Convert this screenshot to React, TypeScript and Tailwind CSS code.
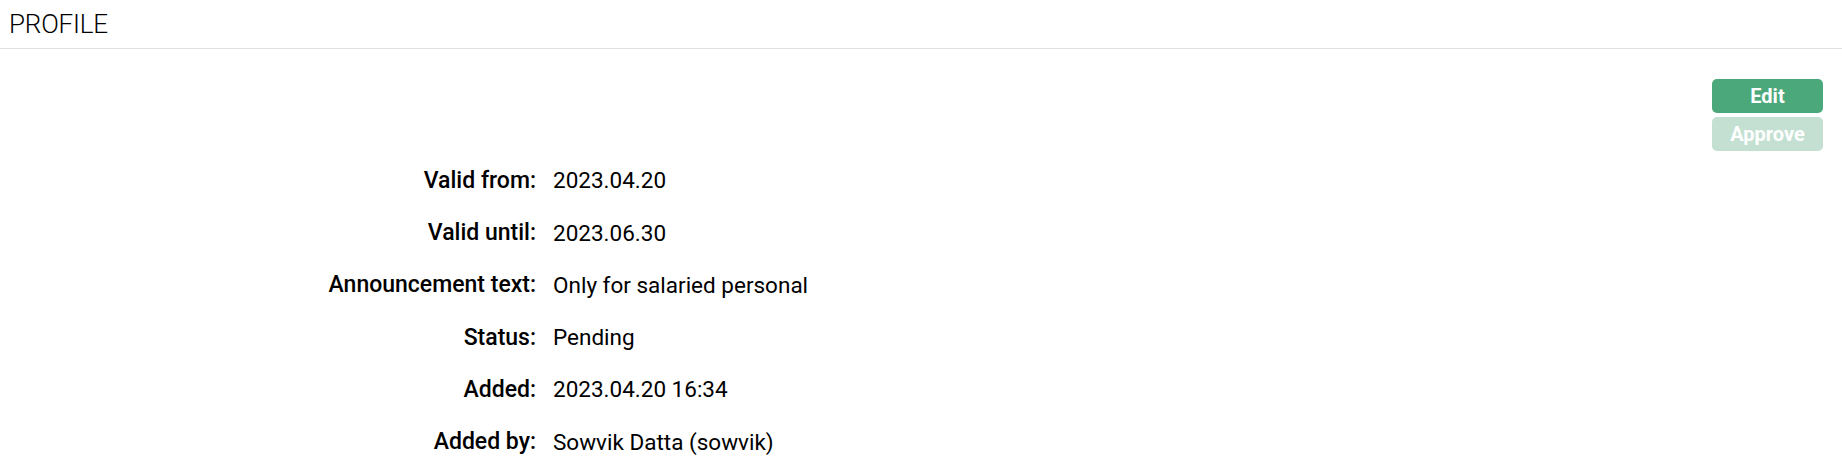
const rows: [string, string][] = [
  ["Valid from:", "2023.04.20"],
  ["Valid until:", "2023.06.30"],
  ["Announcement text:", "Only for salaried personal"],
  ["Status:", "Pending"],
  ["Added:", "2023.04.20 16:34"],
  ["Added by:", "Sowvik Datta (sowvik)"],
];

export default function App() {
  return (
    <div className="min-h-[467px] bg-white text-black" style={{ fontFamily: "Roboto, sans-serif" }}>
      {/* title bar */}
      <div className="flex h-[49px] items-center border-b border-[#e0e0e0] pl-[9px]">
        <h1 className="text-[26px] font-light leading-none tracking-[-0.2px]">PROFILE</h1>
      </div>

      {/* actions */}
      <div className="flex flex-col items-end gap-[4px] pr-[19px] pt-[30px]">
        <button className="h-[34px] w-[111px] rounded-[5px] bg-[#4aa87b] text-[20px] font-bold text-white">
          Edit
        </button>
        <button
          disabled
          className="h-[34px] w-[111px] rounded-[5px] bg-[#c3e0d2] text-[20px] font-bold text-white"
        >
          Approve
        </button>
      </div>

      {/* details */}
      <div className="mt-[4px] grid grid-cols-[536px_1fr] gap-x-[17px]">
        {rows.map(([label, value]) => (
          <div key={label} className="contents">
            <div className="flex h-[52.3px] items-center justify-end text-[23px] font-medium">{label}</div>
            <div className="flex h-[52.3px] items-center text-[22.5px]">{value}</div>
          </div>
        ))}
      </div>
    </div>
  );
}
